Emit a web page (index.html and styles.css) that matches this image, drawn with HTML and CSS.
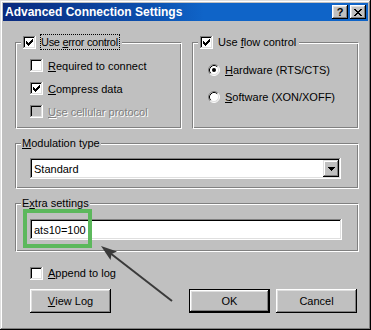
FILE: index.html
```html
<!DOCTYPE html>
<html>
<head>
<meta charset="utf-8">
<link rel="stylesheet" href="styles.css">
</head>
<body>
<div class="window">
  <div class="titlebar">
    <span class="title">Advanced Connection Settings</span>
    <div class="tb-buttons">
      <span class="tb-btn help">?</span>
      <span class="tb-btn"><svg width="8" height="7" viewBox="0 0 8 7"><path d="M0 0h2v1h-2zM6 0h2v1h-2zM1 1h2v1h-2zM5 1h2v1h-2zM2 2h4v1h-4zM3 3h2v1h-2zM2 4h4v1h-4zM1 5h2v1h-2zM5 5h2v1h-2zM0 6h2v1h-2zM6 6h2v1h-2z" fill="#000"/></svg></span>
    </div>
  </div>
  <div class="content">
    <div class="group-row">
      <fieldset class="group">
        <legend class="lg-check">
          <span class="cb"><svg width="13" height="13" viewBox="0 0 13 13"><path d="M9 3h1v1h-1zM8 4h2v1h-2zM3 5h1v1h-1zM7 5h3v1h-3zM3 6h2v1h-2zM6 6h3v1h-3zM3 7h5v1h-5zM4 8h3v1h-3zM5 9h1v1h-1z" fill="#000"/></svg></span>
          <span class="lbl focus">Use <u>e</u>rror control</span>
        </legend>
        <div class="items">
          <div class="opt"><span class="cb"></span><span class="lbl"><u>R</u>equired to connect</span></div>
          <div class="opt"><span class="cb"><svg width="13" height="13" viewBox="0 0 13 13"><path d="M9 3h1v1h-1zM8 4h2v1h-2zM3 5h1v1h-1zM7 5h3v1h-3zM3 6h2v1h-2zM6 6h3v1h-3zM3 7h5v1h-5zM4 8h3v1h-3zM5 9h1v1h-1z" fill="#000"/></svg></span><span class="lbl"><u>C</u>ompress data</span></div>
          <div class="opt disabled"><span class="cb"></span><span class="lbl"><u>U</u>se cellular protocol</span></div>
        </div>
      </fieldset>
      <fieldset class="group">
        <legend class="lg-check">
          <span class="cb"><svg width="13" height="13" viewBox="0 0 13 13"><path d="M9 3h1v1h-1zM8 4h2v1h-2zM3 5h1v1h-1zM7 5h3v1h-3zM3 6h2v1h-2zM6 6h3v1h-3zM3 7h5v1h-5zM4 8h3v1h-3zM5 9h1v1h-1z" fill="#000"/></svg></span>
          <span class="lbl nofocus">Use <u>f</u>low control</span>
        </legend>
        <div class="radios">
          <div class="radio-row">
            <svg class="radio" width="12" height="12" viewBox="0 0 12 12">
              <circle cx="6" cy="6" r="5" fill="#fff"/>
              <path d="M2.11 9.89A5.5 5.5 0 0 1 9.89 2.11" fill="none" stroke="#808080"/>
              <path d="M9.89 2.11A5.5 5.5 0 0 1 2.11 9.89" fill="none" stroke="#fff"/>
              <path d="M2.82 9.18A4.5 4.5 0 0 1 9.18 2.82" fill="none" stroke="#000"/>
              <path d="M9.18 2.82A4.5 4.5 0 0 1 2.82 9.18" fill="none" stroke="#dfdfdf"/>
              <circle cx="6" cy="6" r="2" fill="#000"/>
            </svg>
            <span class="lbl"><u>H</u>ardware (RTS/CTS)</span>
          </div>
          <div class="radio-row">
            <svg class="radio" width="12" height="12" viewBox="0 0 12 12">
              <circle cx="6" cy="6" r="5" fill="#fff"/>
              <path d="M2.11 9.89A5.5 5.5 0 0 1 9.89 2.11" fill="none" stroke="#808080"/>
              <path d="M9.89 2.11A5.5 5.5 0 0 1 2.11 9.89" fill="none" stroke="#fff"/>
              <path d="M2.82 9.18A4.5 4.5 0 0 1 9.18 2.82" fill="none" stroke="#000"/>
              <path d="M9.18 2.82A4.5 4.5 0 0 1 2.82 9.18" fill="none" stroke="#dfdfdf"/>
            </svg>
            <span class="lbl"><u>S</u>oftware (XON/XOFF)</span>
          </div>
        </div>
      </fieldset>
    </div>

    <fieldset class="group g-mod">
      <legend class="lg-text"><u>M</u>odulation type</legend>
      <div class="combo">
        <span class="combo-text">Standard</span>
        <span class="combo-btn"><svg width="7" height="4" viewBox="0 0 7 4"><path d="M0 0h7v1h-7zM1 1h5v1h-5zM2 2h3v1h-3zM3 3h1v1h-1z" fill="#000"/></svg></span>
      </div>
    </fieldset>

    <fieldset class="group g-extra">
      <legend class="lg-text">E<u>x</u>tra settings</legend>
      <div class="field">ats10=100</div>
    </fieldset>

    <div class="opt append"><span class="cb"></span><span class="lbl"><u>A</u>ppend to log</span></div>

    <div class="buttons">
      <span class="btn"><u>V</u>iew Log</span>
      <span class="spacer"></span>
      <span class="btn default">OK</span>
      <span class="btn">Cancel</span>
    </div>
  </div>

  <svg class="annot" width="371" height="330" viewBox="0 0 371 330">
    <rect x="25" y="211" width="65" height="35" fill="none" stroke="#5cb85c" stroke-width="4"/>
    <line x1="172" y1="301" x2="111" y2="253.8" stroke="#3a3a3a" stroke-width="2"/>
    <path d="M101 246 L117 251.5 L111.5 254 L110.5 260 Z" fill="#3a3a3a"/>
  </svg>
</div>
</body>
</html>
```

FILE: styles.css
```css
* {
  box-sizing: border-box;
}

body {
  margin: 0;
  font-family: "Liberation Sans", Arial, sans-serif;
  font-size: 11px;
  color: #000;
  background: #c0c0c0;
}

.window {
  position: relative;
  width: 371px;
  height: 330px;
  padding: 3px;
  background: #c0c0c0;
  box-shadow: inset -1px -1px #000, inset 1px 1px #dfdfdf, inset -2px -2px #808080, inset 2px 2px #fff;
  display: flex;
  flex-direction: column;
}

.titlebar {
  height: 18px;
  display: flex;
  align-items: center;
  justify-content: space-between;
  padding: 0 2px 0 2px;
  background: linear-gradient(90deg, #0a2a7e 0%, #0c50ae 40%, #0f64c8 55%, #0f64c8 100%);
  color: #fff;
}

.title {
  font-weight: bold;
  font-size: 12px;
  line-height: 18px;
}

.tb-buttons {
  display: flex;
  gap: 2px;
}

.tb-btn {
  width: 16px;
  height: 14px;
  display: flex;
  align-items: center;
  justify-content: center;
  background: #c0c0c0;
  color: #000;
  box-shadow: inset -1px -1px #000, inset 1px 1px #fff, inset -2px -2px #808080, inset 2px 2px #dfdfdf;
}

.tb-btn.help {
  font-weight: bold;
  font-size: 11px;
  line-height: 14px;
}

.tb-btn svg {
  display: block;
}

.content {
  flex: 1;
  display: flex;
  flex-direction: column;
  padding: 13px 9px 0 12px;
}

.group-row {
  display: flex;
  gap: 10px;
}

.group {
  margin: 0;
  padding: 0;
  min-width: 0;
  border: 1px solid;
  border-color: #808080 #fff #fff #808080;
  box-shadow: inset 1px 1px #fff, inset -1px -1px #808080;
}

.group-row .group {
  width: 167px;
}

.lg-check {
  display: flex;
  align-items: center;
  height: 16px;
  margin-left: 5px;
  padding: 0 2px;
  background: #c0c0c0;
}

.lg-text {
  margin-left: 5px;
  padding: 0 1px;
  line-height: 14px;
  background: #c0c0c0;
}

.cb {
  flex: none;
  width: 13px;
  height: 13px;
  background: #fff;
  box-shadow: inset -1px -1px #fff, inset 1px 1px #808080, inset -2px -2px #dfdfdf, inset 2px 2px #000;
}

.cb svg {
  display: block;
}

.lbl {
  white-space: nowrap;
}

.focus {
  margin-left: 4px;
  height: 16px;
  line-height: 14px;
  padding: 0 1px 0 0;
  letter-spacing: -0.3px;
  border: 1px dotted #000;
}

.nofocus {
  margin-left: 4px;
  height: 16px;
  line-height: 14px;
  border: 1px solid transparent;
}

.items {
  padding: 4px 0 5px 14px;
}

.opt {
  display: flex;
  align-items: center;
  height: 23px;
}

.opt .cb + .lbl {
  margin-left: 5px;
}

.opt.disabled .cb {
  background: #c0c0c0;
}

.opt.disabled .lbl {
  color: #808080;
  text-shadow: 1px 1px 0 #fff;
}

.radios {
  padding: 6px 0 0 15px;
}

.radio-row {
  display: flex;
  align-items: center;
  height: 27px;
}

.radio {
  display: block;
  flex: none;
}

.radio + .lbl {
  margin-left: 5px;
}

.g-mod {
  margin-top: 7px;
}

.combo,
.field {
  height: 21px;
  background: #fff;
  box-shadow: inset -1px -1px #fff, inset 1px 1px #808080, inset -2px -2px #dfdfdf, inset 2px 2px #000;
  display: flex;
  align-items: center;
  padding: 2px;
}

.combo {
  margin: 8px 17px 9px 14px;
}

.combo-text {
  flex: 1;
  padding-left: 2px;
}

.combo-btn {
  width: 16px;
  height: 17px;
  display: flex;
  align-items: center;
  justify-content: center;
  background: #c0c0c0;
  box-shadow: inset -1px -1px #000, inset 1px 1px #dfdfdf, inset -2px -2px #808080, inset 2px 2px #fff;
}

.combo-btn svg {
  display: block;
}

.g-extra {
  margin-top: 7px;
}

.field {
  margin: 9px 16px 11px 14px;
  padding-left: 4px;
}

.append {
  margin: 13px 0 0 15px;
  height: 16px;
}

.buttons {
  display: flex;
  margin-top: 8px;
  padding: 0 2px 0 15px;
  gap: 6px;
}

.spacer {
  flex: 1;
}

.btn {
  width: 81px;
  height: 24px;
  display: flex;
  align-items: center;
  justify-content: center;
  background: #c0c0c0;
  box-shadow: inset -1px -1px #000, inset 1px 1px #fff, inset -2px -2px #808080, inset 2px 2px #dfdfdf;
}

.btn.default {
  border: 1px solid #000;
}

.annot {
  position: absolute;
  left: 0;
  top: 0;
  pointer-events: none;
}
```
